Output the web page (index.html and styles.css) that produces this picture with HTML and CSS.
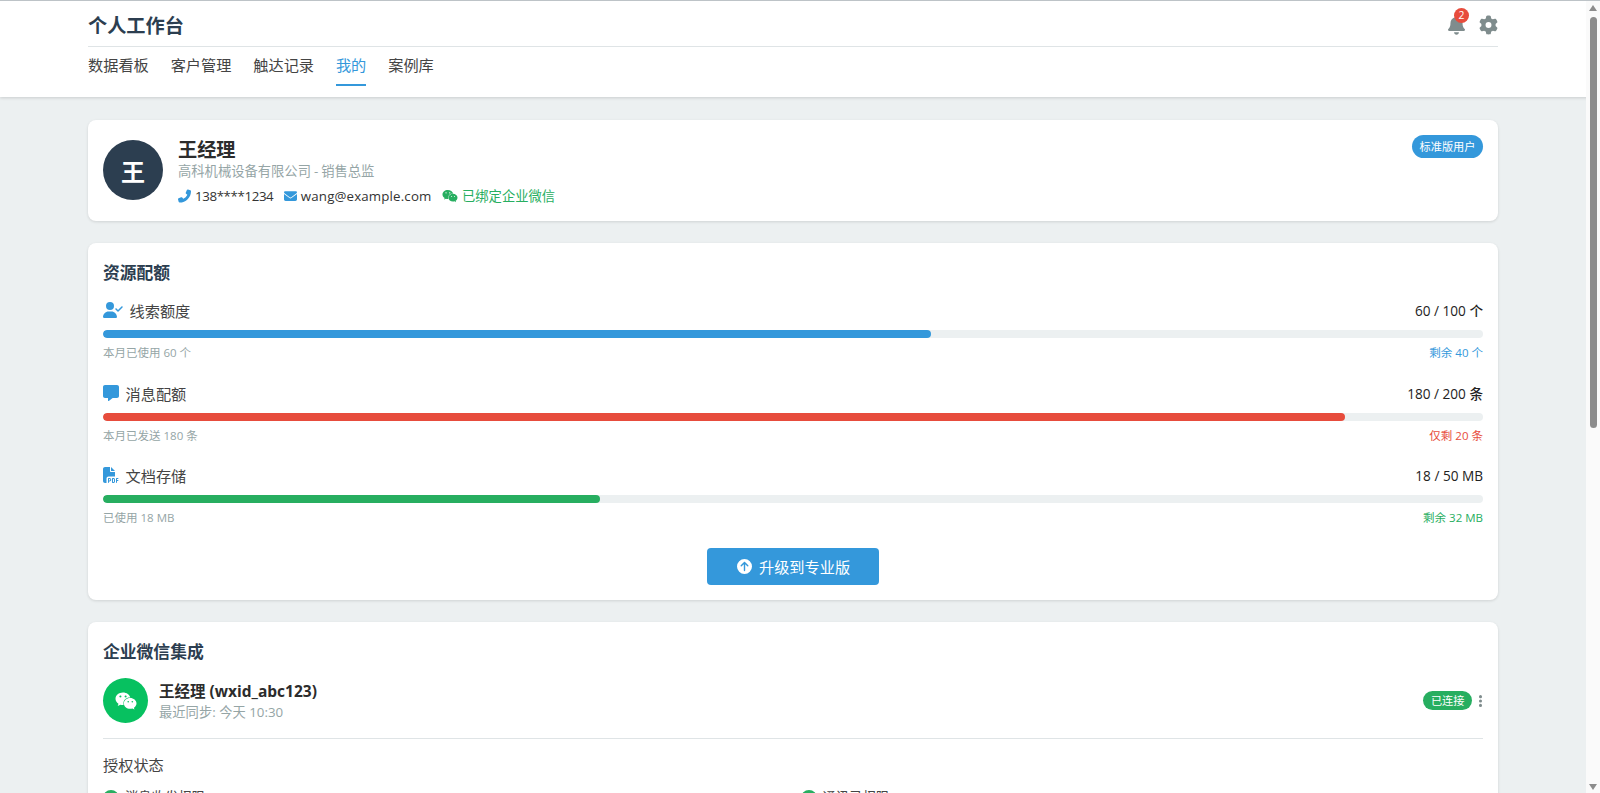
FILE: index.html
```html
<!DOCTYPE html>
<html lang="zh-CN">
<head>
<meta charset="utf-8">
<title>个人工作台</title>
<link rel="stylesheet" href="styles.css">
</head>
<body>
<svg class="defs" aria-hidden="true">
  <symbol id="i-bell" viewBox="0 0 448 512"><path d="M224 0c-17.7 0-32 14.3-32 32V51.2C119 66 64 130.6 64 208v18.8c0 47-17.3 92.4-48.5 127.6l-7.4 8.3c-8.4 9.4-10.4 22.9-5.3 34.4S19.4 416 32 416H416c12.6 0 24-7.4 29.2-18.9s3.1-25-5.3-34.4l-7.4-8.3C401.3 319.2 384 273.9 384 226.8V208c0-77.4-55-142-128-156.8V32c0-17.7-14.3-32-32-32zm45.3 493.3c12-12 18.7-28.3 18.7-45.3H224 160c0 17 6.7 33.3 18.7 45.3s28.3 18.7 45.3 18.7s33.3-6.7 45.3-18.7z"/></symbol>
  <symbol id="i-gear" viewBox="0 0 512 512"><path d="M495.9 166.6c3.2 8.7 .5 18.4-6.4 24.6l-43.3 39.4c1.1 8.3 1.7 16.8 1.7 25.4s-.6 17.1-1.7 25.4l43.3 39.4c6.9 6.2 9.6 15.9 6.4 24.6c-4.4 11.9-9.7 23.3-15.8 34.3l-4.7 8.1c-6.6 11-14 21.4-22.1 31.2c-5.9 7.2-15.7 9.6-24.5 6.8l-55.7-17.7c-13.4 10.3-28.2 18.9-44 25.4l-12.5 57.1c-2 9.1-9 16.3-18.2 17.8c-13.8 2.3-28 3.5-42.5 3.5s-28.7-1.2-42.5-3.5c-9.2-1.5-16.2-8.7-18.2-17.8l-12.5-57.1c-15.8-6.5-30.6-15.1-44-25.4L83.1 425.9c-8.8 2.8-18.6 .3-24.5-6.8c-8.1-9.8-15.5-20.2-22.1-31.2l-4.7-8.1c-6.1-11-11.4-22.4-15.8-34.3c-3.2-8.7-.5-18.4 6.4-24.6l43.3-39.4C64.6 273.1 64 264.6 64 256s.6-17.1 1.7-25.4L22.4 191.2c-6.9-6.2-9.6-15.9-6.4-24.6c4.4-11.9 9.7-23.3 15.8-34.3l4.7-8.1c6.6-11 14-21.4 22.1-31.2c5.9-7.2 15.7-9.6 24.5-6.8l55.7 17.7c13.4-10.3 28.2-18.9 44-25.4l12.5-57.1c2-9.1 9-16.3 18.2-17.8C227.3 1.2 241.5 0 256 0s28.7 1.2 42.5 3.5c9.2 1.5 16.2 8.7 18.2 17.8l12.5 57.1c15.8 6.5 30.6 15.1 44 25.4l55.7-17.7c8.8-2.8 18.6-.3 24.5 6.8c8.1 9.8 15.5 20.2 22.1 31.2l4.7 8.1c6.1 11 11.4 22.4 15.8 34.3zM256 336a80 80 0 1 0 0-160 80 80 0 1 0 0 160z"/></symbol>
  <symbol id="i-phone" viewBox="0 0 512 512"><path d="M164.9 24.6c-7.7-18.6-28-28.5-47.4-23.2l-88 24C12.1 30.2 0 46 0 64C0 311.4 200.6 512 448 512c18 0 33.8-12.1 38.6-29.5l24-88c5.3-19.4-4.6-39.7-23.2-47.4l-96-40c-16.3-6.8-35.2-2.1-46.3 11.6L304.7 368C234.3 334.7 177.3 277.7 144 207.3L193.3 167c13.7-11.2 18.4-30 11.6-46.3l-40-96z"/></symbol>
  <symbol id="i-mail" viewBox="0 0 512 512"><path d="M48 64C21.5 64 0 85.5 0 112c0 15.1 7.1 29.3 19.2 38.4L236.8 313.6c11.4 8.5 27 8.5 38.4 0L492.8 150.4c12.1-9.1 19.2-23.3 19.2-38.4c0-26.5-21.5-48-48-48H48zM0 176V384c0 35.3 28.7 64 64 64H448c35.3 0 64-28.7 64-64V176L294.4 339.2c-22.8 17.1-54 17.1-76.8 0L0 176z"/></symbol>
  <symbol id="i-wechat" viewBox="0 0 576 512"><path d="M385.2 167.6c6.4 0 12.6.3 18.8 1.1C387.4 90.3 303.3 32 207.7 32 100.5 32 13 104.8 13 197.4c0 53.4 29.3 97.5 77.9 131.6l-19.3 58.6 68-34.1c24.4 4.8 43.8 9.7 68.2 9.7 6.2 0 12.1-.3 18.3-.8-4-12.9-6.2-26.6-6.2-40.8-.1-84.9 72.9-154 165.3-154zm-104.5-52.9c14.5 0 24.2 9.7 24.2 24.4 0 14.5-9.7 24.2-24.2 24.2-14.8 0-29.3-9.7-29.3-24.2.1-14.7 14.6-24.4 29.3-24.4zm-136.4 48.6c-14.5 0-29.3-9.7-29.3-24.2 0-14.8 14.8-24.4 29.3-24.4 14.8 0 24.4 9.7 24.4 24.4 0 14.6-9.6 24.2-24.4 24.2zM563 319.4c0-77.9-77.9-141.3-165.4-141.3-92.7 0-165.4 63.4-165.4 141.3S305 460.7 397.6 460.7c19.3 0 38.9-5.1 58.6-9.9l53.4 29.3-14.8-48.6C534 402.1 563 363.2 563 319.4zm-219.1-24.5c-9.7 0-19.3-9.7-19.3-19.6 0-9.7 9.7-19.3 19.3-19.3 14.8 0 24.4 9.7 24.4 19.3 0 10-9.7 19.6-24.4 19.6zm107.1 0c-9.7 0-19.3-9.7-19.3-19.6 0-9.7 9.7-19.3 19.3-19.3 14.5 0 24.4 9.7 24.4 19.3.1 10-9.9 19.6-24.4 19.6z"/></symbol>
  <symbol id="i-user" viewBox="0 0 640 512"><path d="M96 128a128 128 0 1 1 256 0A128 128 0 1 1 96 128zM0 482.3C0 383.8 79.8 304 178.3 304h91.4C368.2 304 448 383.8 448 482.3c0 16.4-13.3 29.7-29.7 29.7H29.7C13.3 512 0 498.7 0 482.3zM625 177L497 305c-9.4 9.4-24.6 9.4-33.9 0l-64-64c-9.4-9.4-9.4-24.6 0-33.9s24.6-9.4 33.9 0l47 47L591 143c9.4-9.4 24.6-9.4 33.9 0s9.4 24.6 0 33.9z"/></symbol>
  <symbol id="i-msg" viewBox="0 0 512 512"><path d="M64 0C28.7 0 0 28.7 0 64V352c0 35.3 28.7 64 64 64h96v80c0 6.1 3.4 11.6 8.8 14.3s11.9 2.1 16.8-1.5L309.3 416H448c35.3 0 64-28.7 64-64V64c0-35.3-28.7-64-64-64H64z"/></symbol>
  <symbol id="i-pdf" viewBox="0 0 512 512"><path d="M0 64C0 28.7 28.7 0 64 0H224V128c0 17.7 14.3 32 32 32H384V304H176c-35.3 0-64 28.7-64 64V512H64c-35.3 0-64-28.7-64-64V64zm384 64H256V0L384 128zM176 352h32c30.9 0 56 25.1 56 56s-25.1 56-56 56H192v32c0 8.8-7.2 16-16 16s-16-7.2-16-16V448 368c0-8.8 7.2-16 16-16zm32 80c13.3 0 24-10.7 24-24s-10.7-24-24-24H192v48h16zm96-80h32c26.5 0 48 21.5 48 48v64c0 26.5-21.5 48-48 48H304c-8.8 0-16-7.2-16-16V368c0-8.8 7.2-16 16-16zm32 128c8.8 0 16-7.2 16-16V400c0-8.8-7.2-16-16-16H320v96h16zm80-112c0-8.8 7.2-16 16-16h48c8.8 0 16 7.2 16 16s-7.2 16-16 16H448v32h32c8.8 0 16 7.2 16 16s-7.2 16-16 16H448v48c0 8.8-7.2 16-16 16s-16-7.2-16-16V432 368z"/></symbol>
  <symbol id="i-up" viewBox="0 0 512 512"><path d="M256 512A256 256 0 1 0 256 0a256 256 0 1 0 0 512zM385 215c9.4 9.4 9.4 24.6 0 33.9s-24.6 9.4-33.9 0l-71-71V392c0 13.3-10.7 24-24 24s-24-10.7-24-24V177.9l-71 71c-9.4 9.4-24.6 9.4-33.9 0s-9.4-24.6 0-33.9L239 103c9.4-9.4 24.6-9.4 33.9 0L385 215z"/></symbol>
  <symbol id="i-dots" viewBox="0 0 128 512"><path d="M64 360a56 56 0 1 0 0 112 56 56 0 1 0 0-112zm0-160a56 56 0 1 0 0 112 56 56 0 1 0 0-112zM120 96A56 56 0 1 0 8 96a56 56 0 1 0 112 0z"/></symbol>
  <symbol id="i-check" viewBox="0 0 512 512"><path d="M256 512A256 256 0 1 0 256 0a256 256 0 1 0 0 512zM369 209L241 337c-9.4 9.4-24.6 9.4-33.9 0l-64-64c-9.4-9.4-9.4-24.6 0-33.9s24.6-9.4 33.9 0l47 47L335 175c9.4-9.4 24.6-9.4 33.9 0s9.4 24.6 0 33.9z"/></symbol>
</svg>

<div class="page">
  <header class="topbar">
    <div class="wrap">
      <div class="topbar-row">
        <h1 class="app-title">个人工作台</h1>
        <div class="top-actions">
          <span class="bell">
            <svg class="ic ic-bell"><use href="#i-bell"/></svg>
            <span class="bell-badge">2</span>
          </span>
          <svg class="ic ic-gear"><use href="#i-gear"/></svg>
        </div>
      </div>
      <nav class="tabs">
        <a class="tab">数据看板</a>
        <a class="tab">客户管理</a>
        <a class="tab">触达记录</a>
        <a class="tab active">我的</a>
        <a class="tab">案例库</a>
      </nav>
    </div>
  </header>

  <main class="wrap content">
    <section class="card profile">
      <div class="avatar">王</div>
      <div class="profile-info">
        <div class="profile-name">王经理</div>
        <div class="profile-role">高科机械设备有限公司 - 销售总监</div>
        <div class="contacts">
          <span class="contact"><svg class="ic ic-c blue flip"><use href="#i-phone"/></svg><span class="tel">138****1234</span></span>
          <span class="contact"><svg class="ic ic-c blue"><use href="#i-mail"/></svg><span class="addr">wang@example.com</span></span>
          <span class="contact green"><svg class="ic ic-wx"><use href="#i-wechat"/></svg>已绑定企业微信</span>
        </div>
      </div>
      <span class="plan-badge">标准版用户</span>
    </section>

    <section class="card quota">
      <h2 class="card-title">资源配额</h2>

      <div class="quota-item">
        <div class="quota-head">
          <span class="quota-label"><svg class="ic ic-user blue"><use href="#i-user"/></svg>线索额度</span>
          <span class="quota-value">60 / 100 个</span>
        </div>
        <div class="bar"><div class="fill fill-blue" style="width:60%"></div></div>
        <div class="quota-foot"><span>本月已使用 60 个</span><span class="blue">剩余 40 个</span></div>
      </div>

      <div class="quota-item">
        <div class="quota-head">
          <span class="quota-label"><svg class="ic ic-q blue"><use href="#i-msg"/></svg>消息配额</span>
          <span class="quota-value">180 / 200 条</span>
        </div>
        <div class="bar"><div class="fill fill-red" style="width:90%"></div></div>
        <div class="quota-foot"><span>本月已发送 180 条</span><span class="red">仅剩 20 条</span></div>
      </div>

      <div class="quota-item">
        <div class="quota-head">
          <span class="quota-label"><svg class="ic ic-q blue"><use href="#i-pdf"/></svg>文档存储</span>
          <span class="quota-value">18 / 50 MB</span>
        </div>
        <div class="bar"><div class="fill fill-green" style="width:36%"></div></div>
        <div class="quota-foot"><span>已使用 18 MB</span><span class="green">剩余 32 MB</span></div>
      </div>

      <div class="upgrade-row">
        <button class="upgrade"><svg class="ic ic-up"><use href="#i-up"/></svg>升级到专业版</button>
      </div>
    </section>

    <section class="card wecom">
      <h2 class="card-title">企业微信集成</h2>
      <div class="wx-row">
        <div class="wx-logo"><svg class="ic ic-wxl"><use href="#i-wechat"/></svg></div>
        <div class="wx-info">
          <div class="wx-name">王经理 (wxid_abc123)</div>
          <div class="wx-sync">最近同步: 今天 10:30</div>
        </div>
        <span class="wx-status">已连接</span>
        <svg class="ic ic-dots"><use href="#i-dots"/></svg>
      </div>
      <h3 class="auth-title">授权状态</h3>
      <div class="auth-grid">
        <div class="auth-item"><svg class="ic ic-check"><use href="#i-check"/></svg>消息收发权限</div>
        <div class="auth-item"><svg class="ic ic-check"><use href="#i-check"/></svg>通讯录权限</div>
      </div>
    </section>
  </main>
</div>

<div class="scrollbar" aria-hidden="true">
  <span class="sb-arrow sb-up"></span>
  <span class="sb-thumb"></span>
  <span class="sb-arrow sb-down"></span>
</div>
</body>
</html>
```

FILE: styles.css
```css
* { box-sizing: border-box; }
html, body { margin: 0; height: 100%; overflow: hidden; }
body {
  font-family: "Open Sans", "Noto Sans CJK SC", sans-serif;
  color: #333;
  background: #ecf0f1;
}
.defs { display: none; }
.page {
  height: 793px;
  overflow: hidden;
  border-top: 1px solid #bdc3c7;
  background: #ecf0f1;
}
.scrollbar {
  position: fixed; top: 1px; right: 0; bottom: 0; width: 14px;
  background: #fafafa;
}
.sb-thumb {
  position: absolute; top: 16px; left: 4px; width: 7px; height: 411px;
  background: #8c8c8c; border-radius: 4px;
}
.sb-arrow { position: absolute; left: 3px; width: 0; height: 0; border-left: 4.5px solid transparent; border-right: 4.5px solid transparent; }
.sb-up { top: 4px; border-bottom: 6px solid #8c8c8c; }
.sb-down { bottom: 3px; border-top: 6px solid #8c8c8c; }

.ic { display: block; fill: currentColor; flex: none; }
.blue { color: #3498db; }
.green { color: #27ae60; }
.red { color: #e74c3c; }
.flip { transform: scaleX(-1); }
.wrap { width: 1410px; margin-left: 88px; }

.topbar { background: #fff; box-shadow: 0 1px 3px rgba(0,0,0,.15); height: 96px; }
.topbar-row {
  display: flex; align-items: center; justify-content: space-between;
  height: 46px; padding-top: 2px; border-bottom: 1px solid #dfe4e6;
}
.app-title { margin: 0; font-size: 19.2px; font-weight: 700; color: #2c3e50; }
.top-actions { display: flex; align-items: center; gap: 14px; color: #7f8c8d; }
.bell { position: relative; display: block; }
.ic-bell { width: 17px; height: 20px; }
.ic-gear { width: 19px; height: 20px; }
.bell-badge {
  position: absolute; top: -7px; left: 6px;
  width: 15px; height: 15px; border-radius: 50%;
  background: #e74c3c; color: #fff; font-size: 10.4px; line-height: 15px; text-align: center;
}
.tabs { display: flex; gap: 21.9px; }
.tab { display: block; padding: 8px 0 8px; font-size: 15.2px; line-height: 21px; color: #444; border-bottom: 2px solid transparent; }
.tab.active { color: #3498db; border-bottom-color: #3498db; }

.content { padding-top: 22.5px; }
.card { background: #fff; border-radius: 8px; box-shadow: 0 1px 3px rgba(0,0,0,.12); padding: 15px; margin-bottom: 22.5px; }

.profile { display: flex; align-items: center; gap: 15px; height: 101.5px; position: relative; margin-bottom: 22px; }
.avatar {
  width: 60px; height: 60px; border-radius: 50%; background: #2c3e50; color: #fff;
  display: flex; align-items: center; justify-content: center; font-size: 24px; font-weight: 700; flex: none;
}
.profile-info { flex: 1; padding-top: 1px; }
.profile-name { font-size: 19.2px; line-height: 27px; font-weight: 700; color: #2c2c2c; }
.profile-role { font-size: 13.3px; line-height: 17px; color: #95a5a6; word-spacing: -.5px; }
.contacts { display: flex; gap: 10.5px; margin-top: 7px; font-size: 13.3px; line-height: 19px; color: #333; }
.contact { display: flex; align-items: center; gap: 4px; }
.tel { letter-spacing: -.38px; }
.addr { letter-spacing: .15px; }
.ic-c { width: 13px; height: 14px; }
.ic-wx { width: 16px; height: 14px; color: #27ae60; }
.plan-badge {
  position: absolute; top: 15px; right: 15px;
  background: #3498db; color: #fff; font-size: 11.2px; line-height: 23px; height: 23px;
  padding: 0 7.5px; border-radius: 12px;
}

.card-title { margin: 0; font-size: 16.8px; line-height: 30px; font-weight: 700; color: #2c3e50; }
.quota-item { margin-top: 12px; margin-bottom: 21.5px; }
.quota-item + .quota-item { margin-top: 0; }
.quota-head { display: flex; justify-content: space-between; align-items: center; height: 20px; }
.quota-label { display: flex; align-items: center; gap: 6.5px; font-size: 15.2px; color: #444; }
.quota-value { font-size: 13.6px; color: #222; font-weight: 500; }
.ic-user { width: 20px; height: 16px; }
.ic-q { width: 16px; height: 16px; }
.bar { height: 8px; margin-top: 10px; background: #ecf0f1; border-radius: 4px; overflow: hidden; }
.fill { height: 100%; border-radius: 4px; }
.fill-blue { background: #3498db; }
.fill-red { background: #e74c3c; }
.fill-green { background: #27ae60; }
.quota-foot { display: flex; justify-content: space-between; margin-top: 7px; font-size: 11.5px; line-height: 16px; color: #95a5a6; }
.upgrade-row { display: flex; justify-content: center; }
.upgrade {
  display: flex; align-items: center; justify-content: center; gap: 7px;
  width: 172.5px; height: 37px; border: 0; border-radius: 4px; padding: 0 0 0 1px;
  background: #3498db; color: #fff; font: inherit; font-size: 15.2px;
}
.ic-up { width: 15px; height: 15px; }

.wx-row { display: flex; align-items: center; gap: 11px; margin-top: 11px; padding-bottom: 15px; border-bottom: 1px solid #dfe4e6; }
.wx-logo { width: 45px; height: 45px; border-radius: 50%; background: #07c160; color: #fff; display: flex; align-items: center; justify-content: center; flex: none; }
.ic-wxl { width: 22px; height: 20px; }
.wx-info { flex: 1; padding-top: 1px; }
.wx-name { font-size: 15.5px; line-height: 21px; font-weight: 700; color: #2c2c2c; }
.wx-sync { font-size: 13.3px; line-height: 20px; color: #95a5a6; }
.wx-status { background: #27ae60; color: #fff; font-size: 11.2px; line-height: 19px; height: 19px; padding: 0 7.5px; border-radius: 10px; }
.ic-dots { width: 5px; height: 14px; color: #7f8c8d; margin-left: -5px; }
.auth-title { margin: 16px 0 0; font-size: 15.2px; line-height: 21px; font-weight: 400; color: #444; }
.auth-grid { display: grid; grid-template-columns: 1fr 1fr; gap: 8px 15px; margin-top: 12px; }
.auth-item { display: flex; align-items: center; gap: 6px; font-size: 13.3px; line-height: 19px; color: #444; }
.ic-check { width: 16px; height: 16px; color: #27ae60; }
```
